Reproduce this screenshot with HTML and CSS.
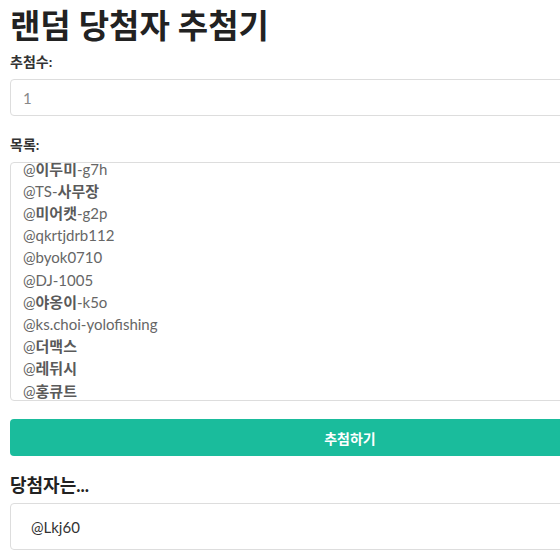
FILE: index.html
```html
<!doctype html>
<html lang="ko">
<head>
    <meta charset="UTF-8">
    <title>랜덤 당첨자 추첨기</title>
    <link rel="stylesheet" href="styles.css">
</head>
<body>
    <div class="wrap">
        <h1 class="title">랜덤 당첨자 추첨기</h1>

        <label class="lbl" for="count">추첨수:</label>
        <input class="field" id="count" type="text" value="1">

        <label class="lbl lbl-list">목록:</label>
        <div class="list" id="list">
            <div>@Lkj60</div>
            <div>@<b>가나다</b>-a1b</div>
            <div>@minji_77</div>
            <div>@<b>이두미</b>-g7h</div>
            <div>@TS-<b>사무장</b></div>
            <div>@<b>미어캣</b>-g2p</div>
            <div>@qkrtjdrb112</div>
            <div>@byok0710</div>
            <div>@DJ-1005</div>
            <div>@<b>야옹이</b>-k5o</div>
            <div>@ks.choi-yolofishing</div>
            <div>@<b>더맥스</b></div>
            <div>@<b>레뒤시</b></div>
            <div>@<b>홍큐트</b></div>
            <div>@sun-k9</div>
            <div>@<b>별빛</b>-0312</div>
        </div>

        <button class="btn" type="button">추첨하기</button>

        <h2 class="sub">당첨자는...</h2>
        <div class="result">@Lkj60</div>
    </div>
    <script>
        window.addEventListener('load',function(){
            // 목록은 아래쪽까지 스크롤된 상태
            document.getElementById('list').scrollTop = 78;
        })
    </script>
</body>
</html>
```

FILE: styles.css
```css
*{
    margin: 0;
    padding: 0;
    box-sizing: border-box;
}
html,body{
    overflow: hidden;
    background: #fff;
}
body{
    font-family: Lato, "Noto Sans CJK KR", sans-serif;
    color: #333;
    padding: 4px 10px 0;
}
.wrap{
    width: 680px;
    display: flex;
    flex-direction: column;
}
.title{
    font-size: 33px;
    line-height: 42px;
    font-weight: 700;
    color: #222;
    margin-bottom: 7px;
}
.lbl{
    font-size: 14px;
    line-height: 18px;
    font-weight: 700;
    color: #333;
    margin-bottom: 8px;
}
.lbl-list{
    margin-top: 20px;
}
.field{
    height: 37px;
    border: 1px solid #ddd;
    border-radius: 4px;
    padding: 0 12px;
    font-family: Lato, "Noto Sans CJK KR", sans-serif;
    font-size: 15px;
    color: #888;
    background: #fff;
    outline: none;
}
.list{
    height: 239px;
    border: 1px solid #ddd;
    border-radius: 4px;
    padding: 6px 12px;
    overflow-y: auto;
    font-size: 15px;
    line-height: 22.2px;
    color: #666;
}
.list b{
    font-weight: 700;
    color: #5a5a5a;
}
.btn{
    margin-top: 18px;
    height: 37px;
    border: 0;
    border-radius: 4px;
    background: #1abc9c;
    color: #fff;
    font-family: Lato, "Noto Sans CJK KR", sans-serif;
    font-size: 14px;
    font-weight: 700;
}
.sub{
    margin-top: 16px;
    font-size: 18px;
    line-height: 26px;
    font-weight: 700;
    color: #222;
}
.result{
    margin-top: 5px;
    height: 47px;
    border: 1px solid #ddd;
    border-radius: 4px;
    padding: 0 20px;
    display: flex;
    align-items: center;
    font-size: 15px;
    color: #333;
}
```
